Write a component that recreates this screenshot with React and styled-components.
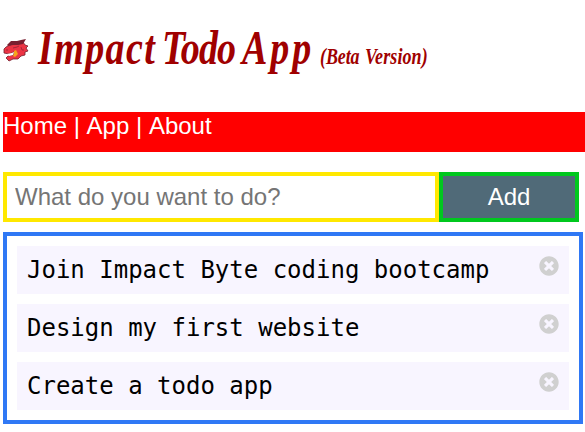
import React from "react";
import styled, { createGlobalStyle } from "styled-components";
import { FaTimesCircle } from "react-icons/fa";

const GlobalStyle = createGlobalStyle`
  * { box-sizing: border-box; }
  body {
    margin: 0;
    background: #fff;
    font-family: "Liberation Sans", Arial, sans-serif;
    font-size: 24px;
    overflow: hidden;
  }
`;

const Page = styled.div`
  padding-left: 3px;
  height: 432px;
`;

const Header = styled.header`
  display: flex;
  height: 112px;
  padding-top: 20px;
`;

const Logo = styled.svg`
  flex: none;
  width: 26px;
  height: 24px;
  margin: 18px 9px 0 0;
`;

const Title = styled.h1`
  display: flex;
  align-items: baseline;
  margin: 0;
  height: 60px;
  line-height: 60px;
  color: #a00000;
  font-family: "Liberation Serif", "Times New Roman", cursive;
  font-style: italic;
  font-weight: 700;
  white-space: nowrap;
  transform: scaleY(1.28);
  transform-origin: 0 40px;
`;

const Word = styled.span`
  flex: none;
  width: ${(p) => p.$width}px;
  font-size: ${(p) => (p.$small ? 18 : 38)}px;
  letter-spacing: ${(p) => p.$spacing || 0}px;
`;

const Nav = styled.nav`
  height: 40px;
  line-height: 28px;
  background: #f00;
  color: #fff;
  white-space: pre;
  font-kerning: none;
`;

const NavLink = styled.a`
  color: #fff;
  text-decoration: none;
`;

const Form = styled.form`
  display: flex;
  width: 576px;
  height: 50px;
  margin: 20px 0 10px;
`;

const TextInput = styled.input`
  width: 436px;
  padding: 0 8px;
  border: 4px solid #ffe800;
  border-radius: 0;
  background: #fff;
  font: inherit;
  outline: none;

  &::placeholder {
    color: #757575;
    opacity: 1;
  }
`;

const AddButton = styled.button`
  width: 140px;
  padding: 0;
  border: 4px solid #00c81e;
  background: #506a78;
  color: #fff;
  font: inherit;
`;

const TodoList = styled.ul`
  display: flex;
  flex-direction: column;
  gap: 10px;
  width: 580px;
  height: 192px;
  margin: 0;
  padding: 10px;
  border: 4px solid #2f78f5;
  list-style: none;
`;

const TodoItem = styled.li`
  display: flex;
  justify-content: space-between;
  height: 48px;
  padding: 10px;
  background: #f8f5ff;
  color: #000;
  font-family: "DejaVu Sans Mono", monospace;
  line-height: 28px;
`;

const RemoveIcon = styled(FaTimesCircle)`
  width: 20px;
  height: 20px;
  color: #d0d0d0;
`;

const todos = [
  "Join Impact Byte coding bootcamp",
  "Design my first website",
  "Create a todo app",
];

function DragonLogo() {
  return (
    <Logo viewBox="0 0 26 24" aria-hidden="true">
      <path d="M1 11 3 9 7 7 13 5 20 4 22 7 25 8 23 10 25 13 22 14 22 17 18 18 15 21 10 21 6 23 3 20 5 18 10 17 11 14 6 16 1 15Z" fill="#ec3444" stroke="#74202f" strokeWidth=".8" strokeLinejoin="round" />
      <path d="M4 7 8 3 14 3 18 2 23 1 20 6 15 7 10 7 5 8Z" fill="#791f30" />
      <path d="m11 13 2-1 2 4-3 3-2-1 1-2Z" fill="#f5a51c" />
      <path d="m4 16 5-1 2-1-1 3-4 1" fill="#fff" />
      <path d="m10 10 4-1 2-1M3 12l2 0M18 9l1 3 2 0" fill="none" stroke="#962337" strokeWidth=".8" />
    </Logo>
  );
}

export default function App() {
  return (
    <>
      <GlobalStyle />
      <Page>
        <Header>
          <DragonLogo />
          <Title>
            <Word $width={124} $spacing={1.4}>Impact</Word>
            <Word $width={80} $spacing={-0.9}>Todo</Word>
            <Word $width={78} $spacing={3}>App</Word>
            <Word $width={45} $spacing={-0.1} $small>(Beta</Word>
            <Word $width={65} $spacing={0.1} $small>Version)</Word>
          </Title>
        </Header>
        <Nav>
          <NavLink>Home</NavLink> | <NavLink>App</NavLink> | <NavLink>About</NavLink>
        </Nav>
        <Form onSubmit={(e) => e.preventDefault()}>
          <TextInput placeholder="What do you want to do?" />
          <AddButton>Add</AddButton>
        </Form>
        <TodoList>
          {todos.map((todo) => (
            <TodoItem key={todo}>
              {todo}
              <RemoveIcon />
            </TodoItem>
          ))}
        </TodoList>
      </Page>
    </>
  );
}
